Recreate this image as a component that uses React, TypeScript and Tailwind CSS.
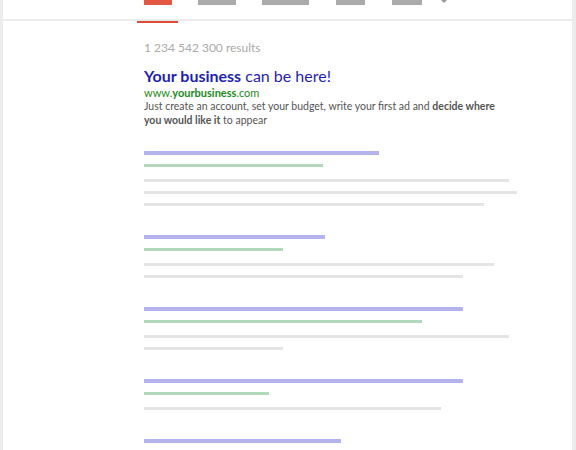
const GROUPS = [
  { title: 235, url: 179, lines: [365, 373, 340] },
  { title: 181, url: 139, lines: [350, 319] },
  { title: 319, url: 278, lines: [365, 139] },
  { title: 319, url: 125, lines: [297] },
  { title: 197, url: 150, lines: [320, 280] },
];

function Tabs() {
  return (
    <div className="flex h-[21px] items-start border-b-2 border-[#ebebeb]">
      <div className="ml-[134px] -mb-[2px] flex h-[23px] w-[41px] justify-center border-b-2 border-[#dd4b39]">
        <div className="h-[5px] w-[28px] bg-[#e25843]" />
      </div>
      <div className="ml-[20px] h-[5px] w-[38px] bg-[#aaaaaa]" />
      <div className="ml-[26px] h-[5px] w-[47px] bg-[#aaaaaa]" />
      <div className="ml-[27px] h-[5px] w-[29px] bg-[#aaaaaa]" />
      <div className="ml-[27px] h-[5px] w-[30px] bg-[#aaaaaa]" />
      <div className="ml-[19px] h-0 w-0 border-x-[3px] border-t-[3px] border-x-transparent border-t-[#999999]" />
    </div>
  );
}

function Ad() {
  return (
    <div className="mt-[10px]">
      <div className="text-[16px] leading-[20px] text-[#1f1fb0]">
        <span className="font-bold">Your business</span> can be here!
      </div>
      <div className="text-[11px] leading-[13px] text-[#1c8a1c]">
        www.<span className="font-bold">yourbusiness</span>.com
      </div>
      <p className="mt-[1px] w-[360px] text-[10.5px] leading-[13.5px] text-[#555555]">
        Just create an account, set your budget, write your first ad and{" "}
        <span className="font-bold">decide where you would like it</span> to appear
      </p>
    </div>
  );
}

export default function App() {
  return (
    <div className="h-[450px] overflow-hidden bg-[#ececec] pl-[3px] pr-[4px]" style={{ fontFamily: "Lato, 'Open Sans', sans-serif" }}>
      <div className="h-full bg-white">
        <Tabs />
        <div className="pl-[141px] pt-[19px]">
          <div className="text-[12px] leading-[16px] text-[#aaaaaa]">1 234 542 300 results</div>
          <Ad />
          <div className="mt-[24px] flex flex-col gap-[29px]">
            {GROUPS.map((g, i) => (
              <div key={i} className="flex flex-col">
                <div className="h-[4px] bg-[#b3b4ee]" style={{ width: g.title }} />
                <div className="mt-[9px] h-[3px] bg-[#b3d9bc]" style={{ width: g.url }} />
                {g.lines.map((w, j) => (
                  <div key={j} className={`${j === 0 ? "mt-[12px]" : "mt-[9px]"} h-[3px] bg-[#e4e4e4]`} style={{ width: w }} />
                ))}
              </div>
            ))}
          </div>
        </div>
      </div>
    </div>
  );
}
